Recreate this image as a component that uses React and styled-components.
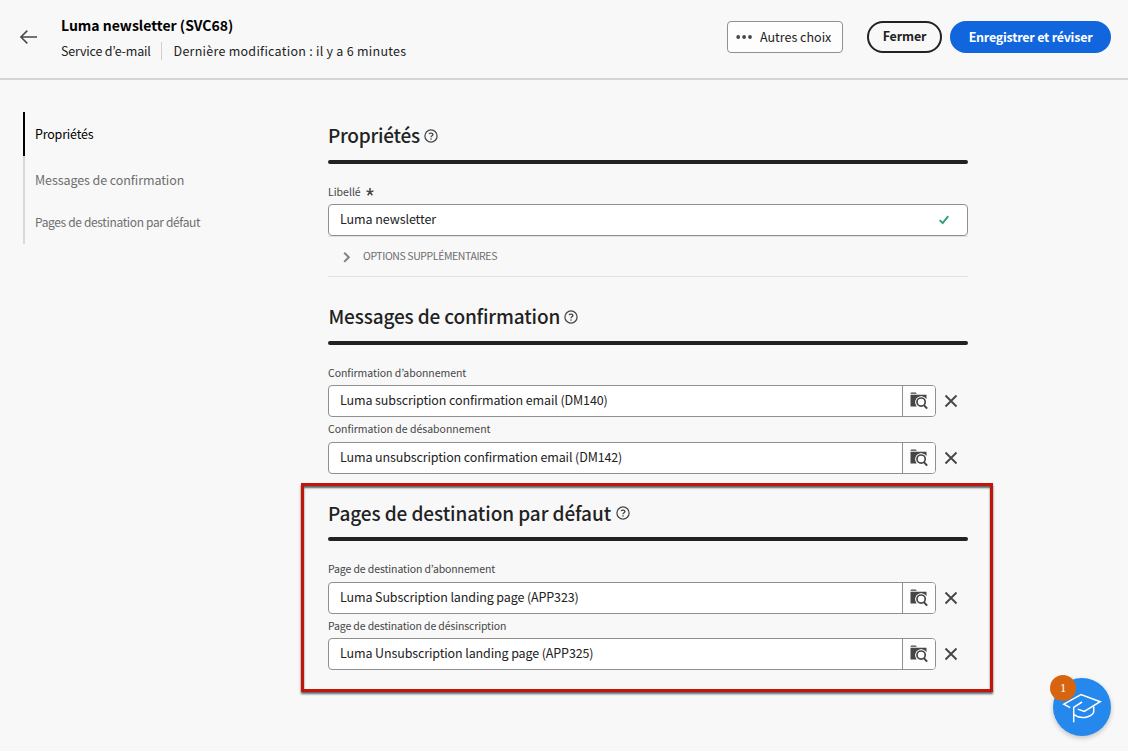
import React from 'react';
import styled, { createGlobalStyle, css } from 'styled-components';

const GlobalStyle = createGlobalStyle`
  * { box-sizing: border-box; }
  body {
    margin: 0;
    background: #f8f8f8;
    color: #222;
    font-family: "Noto Sans CJK JP", "Noto Sans", sans-serif;
    font-size: 12.5px;
    overflow: hidden;
  }
  button { font-family: inherit; padding: 0; cursor: pointer; }
  h1, h2, p { margin: 0; }
  svg { display: block; flex: none; }
`;

const tracked = css`
  letter-spacing: ${(p) => p.$track || 0}px;
  white-space: nowrap;
`;

const Page = styled.div`
  height: 751px;
`;

const Header = styled.header`
  display: flex;
  align-items: flex-start;
  height: 80px;
  padding: 14px 17px 0 19px;
  border-bottom: 2px solid #d5d5d5;
`;

const BackButton = styled.button`
  width: 20px;
  height: 20px;
  margin: 13px 22px 0 0;
  border: 0;
  background: none;
`;

const TitleBlock = styled.div`
  flex: 1;
`;

const Title = styled.h1`
  height: 22px;
  color: #000;
  font-size: 14px;
  font-weight: 700;
  line-height: 22px;
`;

const Meta = styled.div`
  display: flex;
  align-items: center;
  height: 21px;
  margin-top: 4px;
`;

const MetaText = styled.span`
  line-height: 21px;
  ${tracked}
`;

const MetaDivider = styled.i`
  width: 1px;
  height: 18px;
  margin: 0 12px 0 10px;
  background: #d0d0d0;
`;

const Actions = styled.div`
  display: flex;
  margin-top: 7px;
`;

const MoreButton = styled.button`
  display: flex;
  align-items: center;
  gap: 7px;
  width: 116px;
  height: 32px;
  margin-right: 24px;
  padding: 0 0 0 8px;
  border: 1px solid #909090;
  border-radius: 4px;
  background: #fdfdfd;
  color: #222;
  font-size: 12.5px;
  line-height: 30px;
`;

const PillButton = styled.button`
  width: ${(p) => p.$width}px;
  height: 32px;
  margin-right: ${(p) => (p.$primary ? 0 : 8)}px;
  padding-bottom: ${(p) => (p.$primary ? 0 : 2)}px;
  border: 2px solid ${(p) => (p.$primary ? '#1166dd' : '#222')};
  border-radius: 16px;
  background: ${(p) => (p.$primary ? '#1166dd' : '#f8f8f8')};
  color: ${(p) => (p.$primary ? '#fff' : '#222')};
  font-size: 12.5px;
  font-weight: 700;
  line-height: 26px;
  ${tracked}
`;

const Body = styled.div`
  display: flex;
`;

const SideNav = styled.nav`
  flex: none;
  width: 301px;
  padding: 32px 0 0 23px;
`;

const NavItem = styled.div`
  height: 44px;
  padding-left: 10px;
  border-left: 2px solid ${(p) => (p.$active ? '#000' : '#d8d8d8')};
  color: ${(p) => (p.$active ? '#000' : '#6e6e6e')};
  font-size: ${(p) => p.$size || 12.5}px;
  line-height: ${(p) => p.$line || 44}px;
  ${tracked}
`;

const Main = styled.main`
  width: 692px;
  padding-top: 40px;
`;

const Section = styled.section`
  padding: 0 25px 0 27px;
  margin-bottom: ${(p) => p.$gap || 0}px;
`;

const HighlightedSection = styled.section`
  padding: 11px 22px 19px 24px;
  border: 3px solid #c0140c;
  box-shadow:
    0 2px 2px rgba(40, 50, 50, 0.75),
    inset 0 2px 2px rgba(40, 50, 50, 0.75);
`;

const SectionHead = styled.div`
  display: flex;
  align-items: center;
  gap: ${(p) => p.$gap || 4}px;
  height: 30px;
  padding: 2px 0 0 ${(p) => p.$indent || 0}px;
`;

const SectionTitle = styled.h2`
  height: 30px;
  color: #222;
  font-size: 19px;
  font-weight: 500;
  line-height: ${(p) => p.$line || 28}px;
  ${tracked}
`;

const Bar = styled.div`
  height: 4px;
  margin: 10px 0 18px;
  border-radius: 2px;
  background: #222;
`;

const FieldLabel = styled.div`
  display: flex;
  gap: 5px;
  height: 18px;
  margin: ${(p) => p.$top || 0}px 0 ${(p) => p.$bottom || 4}px;
  color: #464646;
  font-size: 10.5px;
  line-height: 20px;
  ${tracked}
`;

const TextField = styled.div`
  display: flex;
  align-items: center;
  justify-content: space-between;
  height: 32px;
  padding: 0 18px 0 11px;
  border: 1px solid #909090;
  border-radius: 4px;
  background: #fff;
`;

const FieldRow = styled.div`
  display: flex;
  align-items: center;
  gap: 8px;
`;

const Picker = styled.div`
  display: flex;
  width: 608px;
  height: 32px;
  border: 1px solid #909090;
  border-radius: 4px;
  background: #fff;
`;

const PickerValue = styled.div`
  flex: 1;
  padding-left: 11px;
`;

const Value = styled.p`
  height: 30px;
  color: #222;
  line-height: 28px;
  ${tracked}
`;

const PickerButton = styled.button`
  display: flex;
  align-items: center;
  justify-content: center;
  width: 33px;
  border: 0;
  border-left: 1px solid #909090;
  border-radius: 0 3px 3px 0;
  background: #fdfdfd;
`;

const ClearButton = styled.button`
  width: 14px;
  height: 14px;
  border: 0;
  background: none;
`;

const MoreOptions = styled.div`
  display: flex;
  align-items: center;
  gap: 11px;
  height: 41px;
  padding: 0 0 0 14px;
  border-top: 1px solid #e1e1e1;
  border-bottom: 1px solid #e1e1e1;
`;

const MoreOptionsText = styled.span`
  padding-bottom: 1px;
  color: #6e6e6e;
  font-size: 10.5px;
  line-height: 18px;
  ${tracked}
`;

const HelpFab = styled.button`
  position: fixed;
  right: 17px;
  bottom: 15px;
  width: 58px;
  height: 58px;
  border: 0;
  border-radius: 50%;
  background: #2488ec;
  box-shadow: 0 2px 5px rgba(0, 0, 0, 0.22);
`;

const FabBadge = styled.span`
  position: absolute;
  top: -3px;
  left: -3px;
  width: 26px;
  height: 26px;
  border-radius: 50%;
  background: #d7640f;
  color: #fff;
  font: 12.5px/26px "Liberation Serif", serif;
  text-align: center;
`;

const BackIcon = () => (
  <svg width="20" height="20" viewBox="0 0 20 20" fill="none" stroke="#464646" strokeWidth="1.5">
    <path d="M18 10H2M8.3 3.6L1.9 10l6.4 6.4" />
  </svg>
);

const DotsIcon = () => (
  <svg width="17" height="6" viewBox="0 0 17 6" fill="#464646">
    <circle cx="2.2" cy="3" r="1.9" />
    <circle cx="8.1" cy="3" r="1.9" />
    <circle cx="14" cy="3" r="1.9" />
  </svg>
);

const HelpIcon = () => (
  <svg width="14" height="14" viewBox="0 0 14 14" fill="none" stroke="#464646">
    <circle cx="7" cy="7" r="6.1" strokeWidth="1.25" />
    <path d="M5.1 5.1C5.6 3.7 8.8 3.6 8.9 5.4C8.9 6.7 7 6.7 7 8.2" strokeWidth="1.3" />
    <circle cx="7" cy="10" r="0.8" fill="#464646" stroke="none" />
  </svg>
);

const AsteriskIcon = () => (
  <svg width="8" height="18" viewBox="0 0 8 18" fill="none" stroke="#464646" strokeWidth="1.5">
    <path d="M4 10V6M4 10L.5 8.9M4 10l3.500-1.100M4 10l-2.300 3.300M4 10l2.300 3.300" />
  </svg>
);

const CheckIcon = () => (
  <svg width="10" height="10" viewBox="0 0 10 10" fill="none" stroke="#2d9d78" strokeWidth="1.9">
    <path d="M.7 5.2l2.900 2.900L9.300 1.200" />
  </svg>
);

const ChevronIcon = () => (
  <svg width="10" height="12" viewBox="0 0 10 12" fill="none" stroke="#808080" strokeWidth="2">
    <path d="M2.200 1.700L6.800 6.300 2.200 10.900" />
  </svg>
);

const FolderSearchIcon = () => (
  <svg width="18" height="18" viewBox="0 0 18 18">
    <path d="M.5 1.200L1.200.5h4.500l1.200 1.200H.5zM.5 2.800h16v4.400A6 6 0 0 0 6 13.300l.7 1.200H.5z" fill="#464646" />
    <circle cx="11.1" cy="10.1" r="5.6" fill="#fdfdfd" />
    <circle cx="11.1" cy="10.1" r="4.1" fill="none" stroke="#464646" strokeWidth="1.7" />
    <path d="M13.900 13.100l3.200 3.500" stroke="#464646" strokeWidth="2.1" fill="none" />
  </svg>
);

const CrossIcon = () => (
  <svg width="14" height="14" viewBox="0 0 14 14" fill="none" stroke="#464646" strokeWidth="1.9">
    <path d="M1.500 1.500l11 11M12.500 1.500l-11 11" />
  </svg>
);

const CapIcon = () => (
  <svg width="58" height="58" viewBox="0 0 58 58" fill="none" stroke="#fff" strokeWidth="1.5">
    <path d="M17.200 29.600L10.800 26.200 28 16.600l19.200 7.100-15.900 9.800-6.600-2.400" />
    <path d="M29 24l-8.300 5.400V44.200M20.700 36.200c4 3.400 9.500 4 14 2.500 3.800-1.300 6-3 6-5.200V28.500" />
  </svg>
);

function Heading({ title, track, indent, gap, line }) {
  return (
    <>
      <SectionHead $indent={indent} $gap={gap}>
        <SectionTitle $track={track} $line={line}>{title}</SectionTitle>
        <HelpIcon />
      </SectionHead>
      <Bar />
    </>
  );
}

function PickerField({ label, labelTrack, top, bottom, value, track }) {
  return (
    <>
      <FieldLabel $track={labelTrack} $top={top} $bottom={bottom}>{label}</FieldLabel>
      <FieldRow>
        <Picker>
          <PickerValue>
            <Value $track={track}>{value}</Value>
          </PickerValue>
          <PickerButton aria-label="Parcourir">
            <FolderSearchIcon />
          </PickerButton>
        </Picker>
        <ClearButton aria-label="Effacer">
          <CrossIcon />
        </ClearButton>
      </FieldRow>
    </>
  );
}

export default function App() {
  return (
    <Page>
      <GlobalStyle />
      <Header>
        <BackButton aria-label="Retour">
          <BackIcon />
        </BackButton>
        <TitleBlock>
          <Title>Luma newsletter (SVC68)</Title>
          <Meta>
            <MetaText $track={-0.2}>Service d’e-mail</MetaText>
            <MetaDivider />
            <MetaText $track={0.26}>Dernière modification : il y a 6 minutes</MetaText>
          </Meta>
        </TitleBlock>
        <Actions>
          <MoreButton>
            <DotsIcon />
            Autres choix
          </MoreButton>
          <PillButton $width={75} $track={-0.15}>Fermer</PillButton>
          <PillButton $width={161} $primary $track={-0.24}>Enregistrer et réviser</PillButton>
        </Actions>
      </Header>
      <Body>
        <SideNav>
          <NavItem $active $track={-0.2}>Propriétés</NavItem>
          <NavItem $line={48} $track={-0.08}>Messages de confirmation</NavItem>
          <NavItem $size={12} $track={-0.35}>Pages de destination par défaut</NavItem>
        </SideNav>
        <Main>
          <Section $gap={24}>
            <Heading title="Propriétés" track={-0.25} />
            <FieldLabel>
              Libellé
              <AsteriskIcon />
            </FieldLabel>
            <TextField>
              <Value $track={-0.08}>Luma newsletter</Value>
              <CheckIcon />
            </TextField>
            <MoreOptions>
              <ChevronIcon />
              <MoreOptionsText $track={-0.4}>OPTIONS SUPPLÉMENTAIRES</MoreOptionsText>
            </MoreOptions>
          </Section>
          <Section $gap={9}>
            <Heading title="Messages de confirmation" track={-0.15} indent={0.5} />
            <PickerField
              label="Confirmation d’abonnement"
              labelTrack={-0.04}
              value="Luma subscription confirmation email (DM140)"
              track={-0.11}
            />
            <PickerField
              label="Confirmation de désabonnement"
              top={2}
              bottom={5}
              value="Luma unsubscription confirmation email (DM142)"
              track={-0.12}
            />
          </Section>
          <HighlightedSection>
            <Heading title="Pages de destination par défaut" track={-0.08} gap={5} line={30} />
            <PickerField
              label="Page de destination d’abonnement"
              labelTrack={-0.11}
              bottom={5}
              value="Luma Subscription landing page (APP323)"
              track={-0.12}
            />
            <PickerField
              label="Page de destination de désinscription"
              labelTrack={-0.13}
              top={2}
              value="Luma Unsubscription landing page (APP325)"
              track={-0.12}
            />
          </HighlightedSection>
        </Main>
      </Body>
      <HelpFab aria-label="Aide">
        <CapIcon />
        <FabBadge>1</FabBadge>
      </HelpFab>
    </Page>
  );
}
